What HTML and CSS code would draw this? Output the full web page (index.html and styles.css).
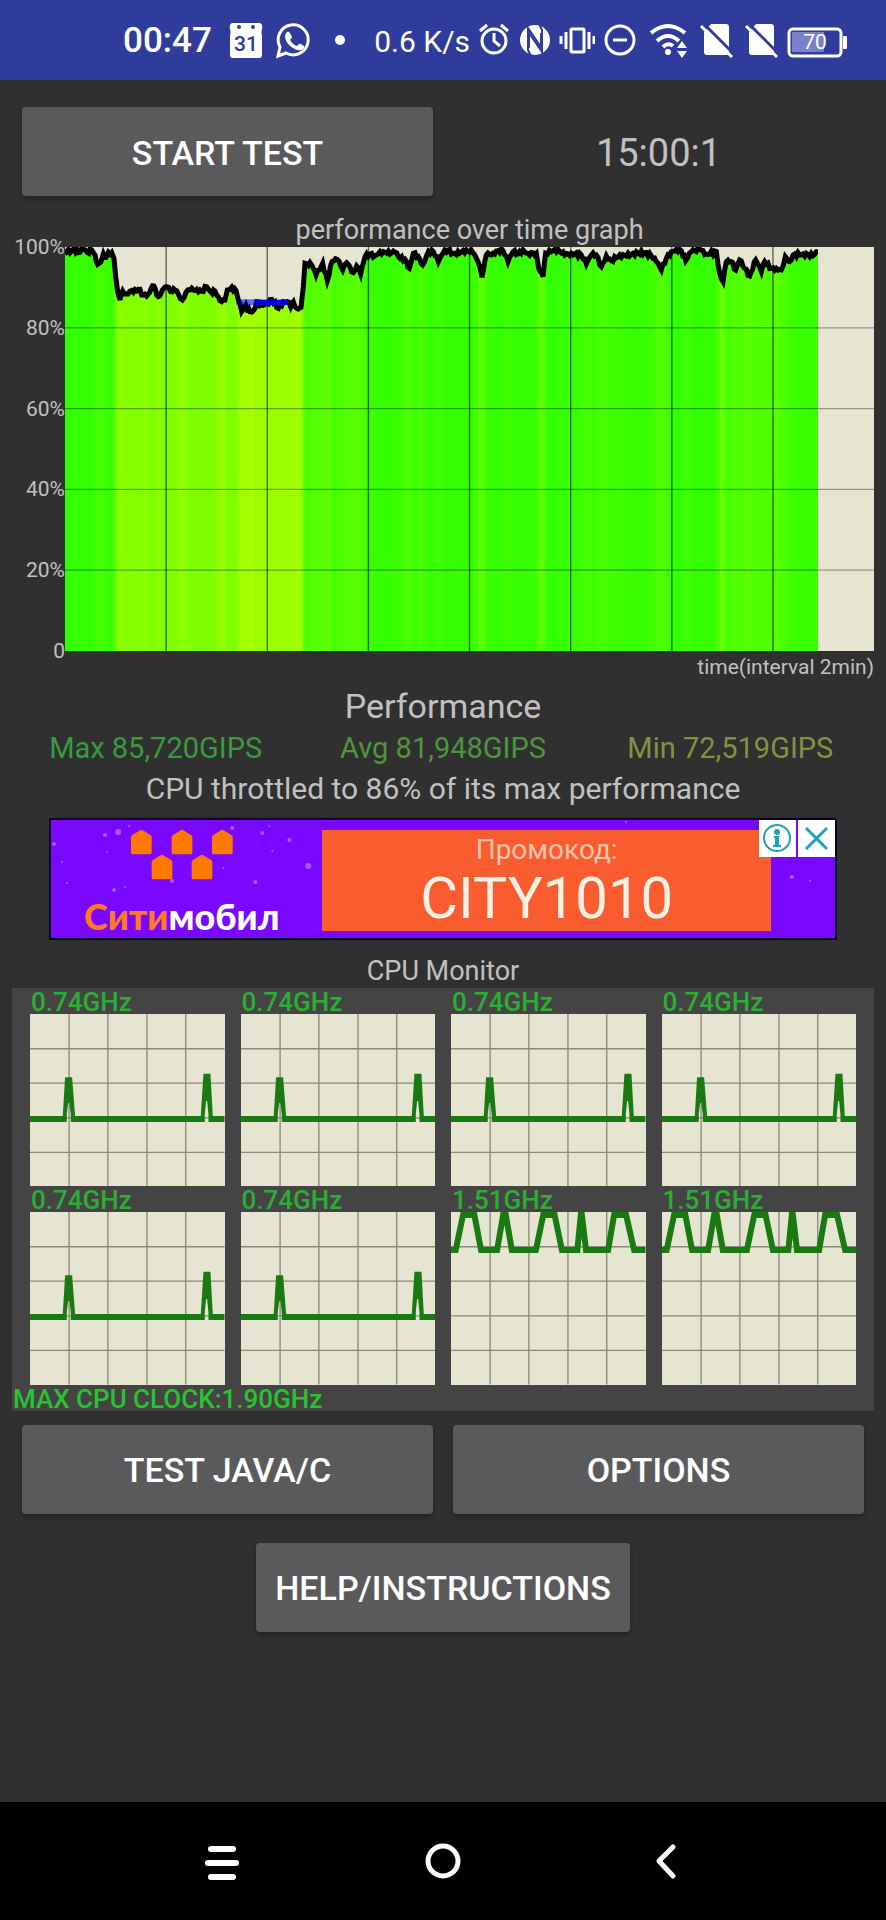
FILE: index.html
```html
<!DOCTYPE html>
<html lang="en">
<head>
    <meta charset="UTF-8">
    <meta name="viewport" content="width=device-width, initial-scale=1.0">
    <title>CPU Throttling Test</title>
    <link rel="stylesheet" href="styles.css">
</head>
<body>

<header class="status-bar">
    <div class="status-group">
        <span class="clock">00:47</span>
        <svg width="34" height="40" viewBox="0 0 34 40">
            <path fill="#fff" d="M3 3H31Q34 4 33 9Q32 12 33 16V35Q33 38 30 38H4Q1 38 1 35V16Q2 12 1 9Q0 4 3 3Z"/>
            <circle cx="10" cy="7" r="2" fill="#303c9c"/>
            <circle cx="24" cy="7" r="2" fill="#303c9c"/>
            <text x="17" y="31" class="cal-day">31</text>
        </svg>
        <svg width="36" height="40" viewBox="0 0 36 40">
            <path fill="none" stroke="#fff" stroke-width="3" d="M3 36L5 27A15 15 0 1 1 11 33Z"/>
            <path fill="#fff" d="M11 13Q13 10 15 13L17 17Q17 18 15 20Q18 25 22 26L24 24Q25 23 29 26Q30 27 28 29Q24 32 18 28Q11 24 10 17Q10 15 11 13Z"/>
        </svg>
        <span class="dot"></span>
    </div>
    <div class="status-group status-right">
        <span class="speed">0.6 K/s</span>
        <svg width="32" height="40" viewBox="0 0 32 40" fill="none" stroke="#fff" stroke-width="3">
            <circle cx="15" cy="21" r="12"/>
            <path d="M15 13V21L21 26M1 11L8 5M22 5L29 11"/>
        </svg>
        <svg width="30" height="40" viewBox="0 0 30 40">
            <circle cx="15" cy="20" r="15" fill="#fff"/>
            <path fill="none" stroke="#303c9c" stroke-width="2" d="M11 36L8 30V8L21 27V13M19 4L22 10V32L9 13V28"/>
        </svg>
        <svg width="36" height="40" viewBox="0 0 36 40" fill="none" stroke="#fff" stroke-width="3">
            <rect x="12" y="9" width="13" height="23" rx="1"/>
            <path d="M7 12V29M2 16V24M30 12V29M35 16V24"/>
        </svg>
        <svg width="33" height="40" viewBox="0 0 33 40" fill="none" stroke="#fff" stroke-width="3">
            <circle cx="16" cy="20" r="14"/>
            <path d="M9 20H23"/>
        </svg>
        <svg width="42" height="40" viewBox="0 0 42 40">
            <path fill="none" stroke="#fff" stroke-width="4" d="M5 13Q22 -1 39 13M11 21Q22 11 33 21M17 27Q22 22 27 26"/>
            <circle cx="22" cy="32" r="3" fill="#fff"/>
            <path fill="#fff" d="M36 21L41 28H31ZM36 38L41 31H31Z"/>
        </svg>
        <svg width="36" height="40" viewBox="0 0 36 40">
            <path fill="#fff" d="M14 4H29Q32 4 32 7V35H10Q7 35 7 32V12Z"/>
            <path stroke="#303c9c" stroke-width="3" d="M6 3L36 33"/>
            <path stroke="#fff" stroke-width="3" d="M4 6L35 37"/>
        </svg>
        <svg width="36" height="40" viewBox="0 0 36 40">
            <path fill="#fff" d="M14 4H29Q32 4 32 7V35H10Q7 35 7 32V12Z"/>
            <path stroke="#303c9c" stroke-width="3" d="M6 3L36 33"/>
            <path stroke="#fff" stroke-width="3" d="M4 6L35 37"/>
        </svg>
        <svg width="60" height="40" viewBox="0 0 60 40">
            <rect x="2" y="9" width="52" height="27" rx="4" fill="none" stroke="#fff" stroke-width="3"/>
            <rect x="5" y="12" width="32" height="20" fill="#7c80c8"/>
            <rect x="56" y="16" width="4" height="13" rx="1" fill="#fff"/>
            <text x="28" y="29" class="battery-level">70</text>
        </svg>
    </div>
</header>

<main class="container">
    <div class="row">
        <button class="btn">START TEST</button>
        <div class="timer">15:00:1</div>
    </div>

    <h2 class="caption graph-title">performance over time graph</h2>
    <div class="graph">
        <div class="y-axis">
            <span>100%</span>
            <span>80%</span>
            <span>60%</span>
            <span>40%</span>
            <span>20%</span>
            <span>0</span>
        </div>
        <svg id="perfGraph" class="plot" viewBox="195 471 2427 1212"></svg>
    </div>
    <div class="x-label">time(interval 2min)</div>

    <h1>Performance</h1>
    <div class="stats">
        <span class="max">Max 85,720GIPS</span>
        <span class="avg">Avg 81,948GIPS</span>
        <span class="min">Min 72,519GIPS</span>
    </div>
    <p class="summary">CPU throttled to 86% of its max performance</p>

    <div class="ad">
        <svg class="confetti" viewBox="0 0 783 118" preserveAspectRatio="none" fill="#a45cff">
            <circle cx="3" cy="24" r="2"/><circle cx="67" cy="12" r="3"/><circle cx="54" cy="15" r="2"/>
            <circle cx="78" cy="6" r="1"/><circle cx="56" cy="32" r="1"/><circle cx="11" cy="42" r="1"/>
            <circle cx="16" cy="63" r="1"/><circle cx="63" cy="70" r="2"/><circle cx="74" cy="67" r="1"/>
            <circle cx="121" cy="61" r="2"/><circle cx="172" cy="48" r="1"/><circle cx="181" cy="8" r="2"/>
            <circle cx="211" cy="13" r="2"/><circle cx="218" cy="6" r="1"/><circle cx="238" cy="20" r="2"/>
            <circle cx="221" cy="31" r="1"/><circle cx="257" cy="46" r="3"/><circle cx="204" cy="62" r="2"/>
            <circle cx="740" cy="57" r="2"/><circle cx="758" cy="61" r="1"/><circle cx="574" cy="2" r="1"/>
        </svg>
        <div class="ad-logo">
            <svg width="102" height="50" viewBox="0 0 306 150">
                <g fill="#ff7900">
                    <path id="house" d="M0 22Q0 18 4 15L27 1Q31 -1 35 1L58 15Q62 18 62 22V68Q62 73 57 73H5Q0 73 0 68Z"/>
                    <use href="#house" x="122"/>
                    <use href="#house" x="243"/>
                    <use href="#house" x="62" y="75"/>
                    <use href="#house" x="182" y="75"/>
                </g>
            </svg>
            <div class="ad-name"><span>Сити</span>мобил</div>
        </div>
        <div class="ad-promo">
            <div class="promo-label">Промокод:</div>
            <div class="promo-code">CITY1010</div>
        </div>
        <div class="ad-controls">
            <button aria-label="Ad info">
                <svg width="37" height="37" viewBox="0 0 37 37">
                    <circle cx="18" cy="18" r="13" fill="none" stroke="#1fa3b8" stroke-width="2"/>
                    <circle cx="18" cy="12" r="3" fill="#1fa3b8"/>
                    <path fill="#1fa3b8" d="M15 16H20V25H22V27H14V25H16V18H15Z"/>
                </svg>
            </button>
            <button aria-label="Close ad">
                <svg width="37" height="37" viewBox="0 0 37 37">
                    <path stroke="#1fa3b8" stroke-width="3" d="M8 8L29 29M29 8L8 29"/>
                </svg>
            </button>
        </div>
    </div>

    <h2 class="caption monitor-title">CPU Monitor</h2>
    <div class="monitor">
        <div id="cores" class="cores"></div>
        <div class="max-clock">MAX CPU CLOCK:1.90GHz</div>
    </div>

    <div class="row actions">
        <button class="btn">TEST JAVA/C</button>
        <button class="btn">OPTIONS</button>
    </div>
    <button class="btn help">HELP/INSTRUCTIONS</button>
</main>

<nav class="nav-bar">
    <button aria-label="Recent apps">
        <svg width="40" height="40" viewBox="0 0 40 40" fill="none" stroke="#fff" stroke-width="6" stroke-linecap="round">
            <path d="M9 8H31M6 22H34M9 36H31"/>
        </svg>
    </button>
    <button aria-label="Home">
        <svg width="40" height="40" viewBox="0 0 40 40" fill="none" stroke="#fff" stroke-width="5">
            <circle cx="20" cy="20" r="15"/>
        </svg>
    </button>
    <button aria-label="Back">
        <svg width="40" height="40" viewBox="0 0 40 40" fill="none" stroke="#fff" stroke-width="5" stroke-linecap="round" stroke-linejoin="round">
            <path d="M28 6L14 20L28 35"/>
        </svg>
    </button>
</nav>

<script src="script.js"></script>
</body>
</html>
```
FILE: styles.css
```css
* {
    box-sizing: border-box;
}

body {
    margin: 0;
    min-height: 100vh;
    display: flex;
    flex-direction: column;
    font-family: Roboto, sans-serif;
    background-color: #303030;
    color: #c1c1c1;
}

svg {
    display: block;
    flex-shrink: 0;
}

button {
    font-family: inherit;
    border: none;
    padding: 0;
    cursor: pointer;
}

h1, h2, p {
    margin: 0;
    font-weight: 400;
    text-align: center;
}

/* status bar */
.status-bar {
    height: 80px;
    padding: 0 39px 0 123px;
    display: flex;
    align-items: center;
    justify-content: space-between;
    background-color: #303c9c;
    color: white;
}

.status-group {
    display: flex;
    align-items: center;
    gap: 12px;
}

.status-right {
    gap: 9px;
}

.clock {
    font-size: 35px;
    font-weight: 500;
    line-height: 40px;
    padding-top: 2px;
    margin-right: 5px;
}

.speed {
    font-size: 30px;
    line-height: 36px;
    padding-top: 4px;
}

.dot {
    width: 10px;
    height: 10px;
    margin-left: 12px;
    border-radius: 50%;
    background-color: white;
}

.cal-day {
    font-size: 21px;
    font-weight: 500;
    text-anchor: middle;
    fill: #303c9c;
}

.battery-level {
    font-size: 21px;
    text-anchor: middle;
    fill: white;
}

/* main screen */
.container {
    flex: 1;
    padding: 27px 12px;
}

.row {
    display: grid;
    grid-template-columns: 1fr 1fr;
    gap: 20px;
    padding: 0 10px;
    align-items: center;
}

.btn {
    height: 89px;
    padding-top: 2px;
    border-radius: 4px;
    background-color: #5a5a5c;
    color: white;
    font-size: 34px;
    font-weight: 500;
    box-shadow: 0 3px 5px rgba(0, 0, 0, 0.3);
}

.timer {
    padding-top: 2px;
    font-size: 38px;
    text-align: center;
}

.caption {
    font-size: 27px;
    line-height: 33px;
}

.graph-title {
    margin-top: 18px;
    padding-left: 53px;
}

.graph {
    display: flex;
}

.y-axis {
    width: 53px;
    margin: -13px 0;
    display: flex;
    flex-direction: column;
    justify-content: space-between;
    text-align: right;
    font-size: 21px;
    line-height: 26px;
}

.plot {
    flex: 1;
    min-width: 0;
    background-color: #e6e5d1;
}

.x-label {
    text-align: right;
    font-size: 21px;
    line-height: 32px;
}

h1 {
    margin-top: 2px;
    font-size: 34px;
    line-height: 42px;
}

.stats {
    display: grid;
    grid-template-columns: 1fr 1fr 1fr;
    text-align: center;
    font-size: 29px;
    line-height: 42px;
}

.max {
    color: #3a9a3f;
}

.avg {
    color: #4f9440;
}

.min {
    color: #7f9440;
}

.summary {
    font-size: 30px;
    line-height: 40px;
}

/* ad banner */
.ad {
    position: relative;
    height: 122px;
    margin: 9px 37px 0;
    padding: 10px 0 7px;
    display: grid;
    grid-template-columns: 271fr 448fr 64fr;
    grid-template-rows: 100%;
    border: 2px solid #0a0020;
    background-color: #7a08ff;
}

.confetti {
    position: absolute;
    inset: 0;
    width: 100%;
    height: 100%;
}

.ad-logo {
    display: flex;
    flex-direction: column;
    align-items: center;
    padding-right: 10px;
}

.ad-name {
    margin-top: 14px;
    font-family: Lato, sans-serif;
    font-size: 36px;
    font-weight: 900;
    line-height: 44px;
    color: white;
}

.ad-name span {
    color: #ff7a20;
}

.ad-promo {
    background-color: #f95c2e;
    text-align: center;
}

.promo-label {
    padding-top: 3px;
    font-size: 28px;
    line-height: 34px;
    color: #ffc4ad;
}

.promo-code {
    font-size: 58px;
    line-height: 62px;
    color: #fff0e4;
}

.ad-controls {
    position: absolute;
    top: 0;
    right: 0;
    display: flex;
    gap: 2px;
}

.ad-controls button {
    background-color: white;
}

/* cpu monitor */
.monitor-title {
    margin-top: 15px;
}

.monitor {
    background-color: #444;
    color: #2cae34;
    font-size: 26px;
    font-weight: 500;
    line-height: 26px;
}

.cores {
    display: grid;
    grid-template-columns: repeat(4, 1fr);
    column-gap: 16px;
    padding: 0 18px;
}

.core-label {
    padding: 2px 0 0 1px;
    line-height: 24px;
}

.core-chart {
    width: 100%;
    background-color: #e6e5d1;
}

.max-clock {
    padding: 2px 0 0 1px;
    line-height: 24px;
    color: #2bc22f;
}

.actions {
    margin-top: 14px;
}

.help {
    display: block;
    margin: 29px auto 0;
    padding: 2px 19px 0;
}

/* navigation */
.nav-bar {
    height: 118px;
    padding: 0 12.5%;
    display: grid;
    grid-template-columns: 1fr 1fr 1fr;
    background-color: black;
}

.nav-bar button {
    display: flex;
    align-items: center;
    justify-content: center;
    background: none;
}
```
FILE: script.js
```js
// performance samples as x,y pairs in graph units
const samples = `195,478 210,488 222,476 235,488 250,478 262,488 275,480 285,495 293,523 303,515 310,492 318,502
325,487 335,487 342,505 347,560 353,605 360,630 368,603 378,612 390,603 400,607 415,598 430,615 445,612 453,596
462,588 470,615 480,617 487,600 500,590 512,605 525,600 535,612 547,630 558,607 570,600 590,598 605,604 620,590
632,605 645,603 655,620 665,635 675,630 682,600 695,592 708,602 715,630 725,665 737,645 750,665 762,660 770,635
785,645 800,640 815,628 835,655 850,635 862,635 872,650 880,635 890,655 903,652 910,590 915,520 935,525 948,555
968,520 982,572 996,515 1012,508 1028,540 1040,518 1060,548 1070,528 1082,552 1095,500 1110,492 1125,497
1140,485 1160,490 1185,487 1200,505 1215,508 1228,535 1240,490 1255,500 1268,525 1285,485 1300,485 1315,515
1329,490 1344,480 1359,490 1379,490 1399,480 1419,488 1434,515 1446,562 1459,495 1479,490 1494,482 1509,482
1524,515 1539,485 1554,492 1569,480 1584,490 1609,490 1616,535 1629,560 1637,490 1654,485 1674,478 1694,495
1714,490 1744,495 1759,522 1774,495 1789,495 1804,530 1819,498 1834,512 1859,495 1879,498 1899,490 1914,490
1934,488 1954,498 1969,515 1984,540 1999,505 2014,485 2029,478 2044,482 2057,512 2074,485 2099,478 2119,492
2149,485 2159,550 2169,575 2179,515 2194,515 2207,540 2219,510 2234,535 2249,558 2267,510 2284,545 2294,515
2314,535 2329,535 2344,540 2356,500 2369,515 2379,495 2409,492 2439,497 2454,485`
    .split(/\s+/).map(p => p.split(',').map(Number));

function drawPerformance() {
    const top = 471, bottom = 1683;
    const points = [];
    let bars = '';
    let n = 0;

    for (let i = 0; i < samples.length - 1; i++) {
        const [x1, y1] = samples[i];
        const [x2, y2] = samples[i + 1];
        const steps = Math.max(1, Math.round((x2 - x1) / 5));
        const red = Math.round(48 + Math.max(0, (y1 + y2) / 2 - top - 8) * 0.66);
        bars += `<rect x="${x1}" y="${Math.max(y1, y2)}" width="${x2 - x1 + (x2 < 2454 ? 1 : 0)}" height="${bottom - Math.max(y1, y2)}" fill="rgb(${red},255,0)"/>`;
        bars += `<path d="M${x1} ${y1}L${x2} ${y2}V${bottom}H${x1}Z" fill="rgb(${red},255,0)"/>`;
        for (let s = 0; s < steps; s++) {
            const x = x1 + (x2 - x1) * s / steps;
            const y = y1 + (y2 - y1) * s / steps + (s ? Math.sin(n * 2.4) * 6 : 0);
            points.push([x, y]);
            n++;
        }
    }
    points.push(samples[samples.length - 1]);

    let grid = '';
    for (let i = 1; i < 8; i++) {
        grid += `<path d="M${195 + i * 303.4} ${top}V${bottom}" stroke="#000" stroke-opacity="0.6" stroke-width="4"/>`;
    }
    for (let i = 1; i < 5; i++) {
        grid += `<path d="M195 ${top + i * 242.4}H2622" stroke="#000" stroke-opacity="0.35" stroke-width="4"/>`;
    }

    document.getElementById('perfGraph').innerHTML = bars + grid +
        '<rect x="708" y="628" width="60" height="17" fill="#8c96ff"/>' +
        `<polyline points="${points.join(' ')}" fill="none" stroke="#000" stroke-width="15"/>` +
        '<rect x="768" y="629" width="96" height="16" fill="#0000d8"/>' +
        '<rect x="708" y="628" width="60" height="17" fill="#00f" fill-opacity="0.3"/>';
}

const idle = '<path fill="#1a7a12" d="M0 305H98L105 189H126L135 305H511L519 179H540L547 305H582V323H534V300L530 260H527L523 300V323H122V300L118 266H114L110 300V323H0Z"/>';
const busy = '<path fill="none" stroke="#1a7a12" stroke-width="18" d="M0 114H14L36 9H70L90 114H138L156 9H164L182 114H254L276 9H310L332 114H378L389 4H391L404 114H470L488 9H524L548 114H582"/>';

function drawCores() {
    const clocks = ['0.74', '0.74', '0.74', '0.74', '0.74', '0.74', '1.51', '1.51'];
    const grid = '<path stroke="#000" stroke-opacity="0.4" stroke-width="4" d="M117 0V516M233 0V516M350 0V516M466 0V516M0 104H582M0 207H582M0 311H582M0 414H582"/>';

    document.getElementById('cores').innerHTML = clocks.map(clock => `
        <div class="core">
            <div class="core-label">${clock}GHz</div>
            <svg class="core-chart" viewBox="0 0 582 516">${grid}${clock > 1 ? busy : idle}</svg>
        </div>`).join('');
}

drawPerformance();
drawCores();
```
